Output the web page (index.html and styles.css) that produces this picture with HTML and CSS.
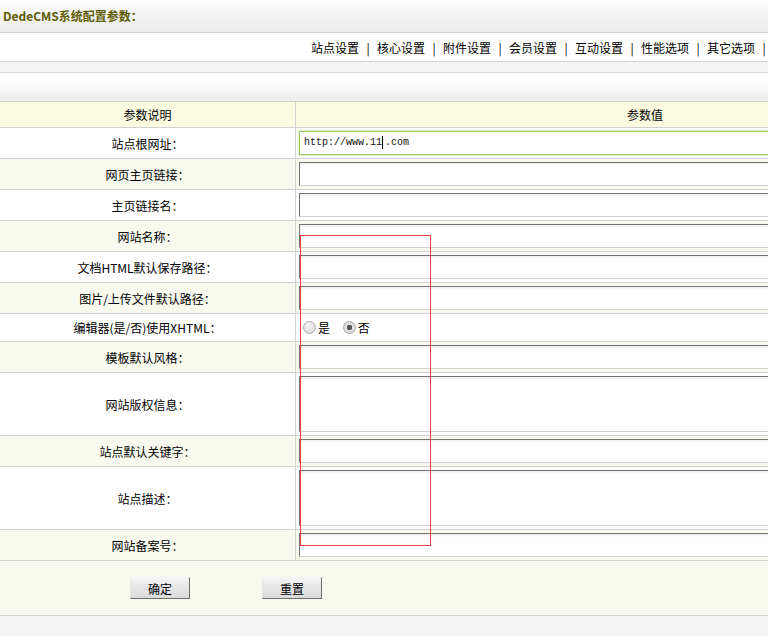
FILE: index.html
```html
<!DOCTYPE html>
<html lang="zh-CN">
<head>
<meta charset="utf-8">
<title>DedeCMS系统配置参数</title>
<link rel="stylesheet" href="styles.css">
</head>
<body>
<div class="page">
  <div class="topbar"><b class="title">DedeCMS系统配置参数：</b></div>
  <div class="nav">
    <a class="nav-link" href="#">站点设置</a><span class="sep">|</span>
    <a class="nav-link" href="#">核心设置</a><span class="sep">|</span>
    <a class="nav-link" href="#">附件设置</a><span class="sep">|</span>
    <a class="nav-link" href="#">会员设置</a><span class="sep">|</span>
    <a class="nav-link" href="#">互动设置</a><span class="sep">|</span>
    <a class="nav-link" href="#">性能选项</a><span class="sep">|</span>
    <a class="nav-link" href="#">其它选项</a><span class="sep">|</span>
  </div>
  <div class="strip"></div>
  <div class="blankbar"></div>
  <table class="cfg">
    <thead>
      <tr class="head"><th class="c1">参数说明</th><th class="c2">参数值</th></tr>
    </thead>
    <tbody>
      <tr><td class="c1">站点根网址：</td><td class="c2"><div class="inp focus" role="textbox">http://www.11<span class="caret"></span>.com</div></td></tr>
      <tr class="alt"><td class="c1">网页主页链接：</td><td class="c2"><input class="inp" type="text"></td></tr>
      <tr><td class="c1">主页链接名：</td><td class="c2"><input class="inp" type="text"></td></tr>
      <tr class="alt"><td class="c1">网站名称：</td><td class="c2"><input class="inp" type="text"></td></tr>
      <tr><td class="c1">文档HTML默认保存路径：</td><td class="c2"><input class="inp" type="text"></td></tr>
      <tr class="alt"><td class="c1">图片/上传文件默认路径：</td><td class="c2"><input class="inp" type="text"></td></tr>
      <tr class="radio-row"><td class="c1">编辑器(是/否)使用XHTML：</td><td class="c2">
        <label class="opt"><input class="rad" type="radio" name="xhtml">是</label>
        <label class="opt"><input class="rad" type="radio" name="xhtml" checked>否</label>
      </td></tr>
      <tr class="alt"><td class="c1">模板默认风格：</td><td class="c2"><input class="inp" type="text"></td></tr>
      <tr class="tall"><td class="c1">网站版权信息：</td><td class="c2"><textarea class="inp ta"></textarea></td></tr>
      <tr class="alt"><td class="c1">站点默认关键字：</td><td class="c2"><input class="inp" type="text"></td></tr>
      <tr class="tall"><td class="c1">站点描述：</td><td class="c2"><textarea class="inp ta"></textarea></td></tr>
      <tr class="alt"><td class="c1">网站备案号：</td><td class="c2"><input class="inp" type="text"></td></tr>
    </tbody>
  </table>
  <div class="actions">
    <button class="btn" type="button">确定</button>
    <button class="btn" type="button">重置</button>
  </div>
  <div class="mark"></div>
</div>
</body>
</html>
```

FILE: styles.css
```css
html, body {
  margin: 0;
  padding: 0;
  background: #f5f5f5;
  overflow: hidden;
}
body {
  font-family: "Noto Sans CJK SC", "Liberation Sans", sans-serif;
  font-size: 12px;
  color: #000;
}
.page {
  position: relative;
  width: 994px;
}
.topbar {
  height: 32px;
  border-bottom: 1px solid #d2d2d2;
  background: linear-gradient(#fcfcfc, #ececec);
  padding-left: 3px;
  line-height: 32px;
}
.title {
  color: #5c5c00;
  font-weight: bold;
  font-size: 12px;
}
.nav {
  height: 28px;
  border-bottom: 1px solid #d2d2d2;
  background: #fff;
  display: flex;
  align-items: center;
  padding-left: 311px;
}
.nav-link {
  color: #000;
  text-decoration: none;
  width: 48px;
  white-space: nowrap;
}
.sep {
  width: 18px;
  text-align: center;
}
.strip {
  height: 10px;
  background: #f4f4f4;
  border-bottom: 1px solid #d6d6d6;
}
.blankbar {
  height: 28px;
  background: linear-gradient(#ffffff, #ffffff 30%, #ececec);
}
.cfg {
  width: 994px;
  border-collapse: collapse;
  border-spacing: 0;
  border-top: 1px solid #d0d0d0;
  background: #fff;
}
.cfg th, .cfg td {
  padding: 0;
  font-weight: normal;
  text-align: center;
  vertical-align: middle;
  border-bottom: 1px solid #d0d0d0;
  height: 30px;
}
.cfg .c1 {
  width: 295px;
  border-right: 1px solid #d4d4d4;
}
.cfg .c2 {
  border-left: 1px solid #d4d4d4;
  text-align: left;
  padding-left: 3px;
}
.cfg .head th {
  height: 25px;
  background: #fbfbe1;
}
.cfg .head .c2 {
  text-align: center;
  padding-left: 0;
}
.cfg .alt td {
  background: #f9faef;
}
.cfg .radio-row td {
  height: 27px;
}
.cfg .tall td {
  height: 62px;
}
.inp {
  box-sizing: border-box;
  display: block;
  width: 620px;
  height: 24px;
  margin: 0;
  padding: 0 4px;
  border: 1px solid;
  border-color: #737373 #d0d0d0 #d0d0d0 #737373;
  background: #fff;
  box-shadow: inset 0 2px 2px rgba(0, 0, 0, 0.06);
  font-family: "Liberation Mono", monospace;
  font-size: 10px;
  outline: none;
}
.inp.focus {
  border: 1px solid #9fc763;
  box-shadow: 0 0 2px 1px #d7e8bd;
  line-height: 22px;
  color: #111;
}
.caret {
  display: inline-block;
  width: 1px;
  height: 13px;
  background: #000;
  vertical-align: middle;
  margin: 0 2px 0 0;
}
.ta {
  height: 56px;
  resize: none;
}
.opt {
  display: inline-flex;
  align-items: center;
  margin-left: 4px;
  margin-right: 5px;
}
.opt + .opt {
  margin-left: 5px;
}
.rad {
  appearance: none;
  -webkit-appearance: none;
  width: 13px;
  height: 13px;
  margin: 0 2px 0 0;
  border: 1px solid #a9a9a9;
  border-radius: 50%;
  background: radial-gradient(circle at 40% 35%, #f6f6f6, #d4d4d4);
  box-sizing: border-box;
}
.rad:checked {
  background: radial-gradient(circle, #555 0, #555 2.5px, #e0e0e0 3px, #d4d4d4);
}
.actions {
  box-sizing: border-box;
  height: 55px;
  background: #f9faef;
  border-bottom: 1px solid #d0d0d0;
  display: flex;
  align-items: flex-start;
  padding-left: 130px;
  padding-top: 16px;
  gap: 72px;
}
.btn {
  box-sizing: border-box;
  width: 60px;
  height: 22px;
  padding: 0;
  border: 1px solid;
  border-color: #f2f2f2 #6e6e6e #6e6e6e #e6e6e6;
  background: linear-gradient(#f4f4f4, #e6e6e6 45%, #dadada);
  font-family: "Noto Sans CJK SC", sans-serif;
  font-size: 12px;
  color: #000;
}
.mark {
  position: absolute;
  left: 300px;
  top: 235px;
  width: 131px;
  height: 311px;
  box-sizing: border-box;
  border: 1px solid #f03c3c;
  pointer-events: none;
}
```
